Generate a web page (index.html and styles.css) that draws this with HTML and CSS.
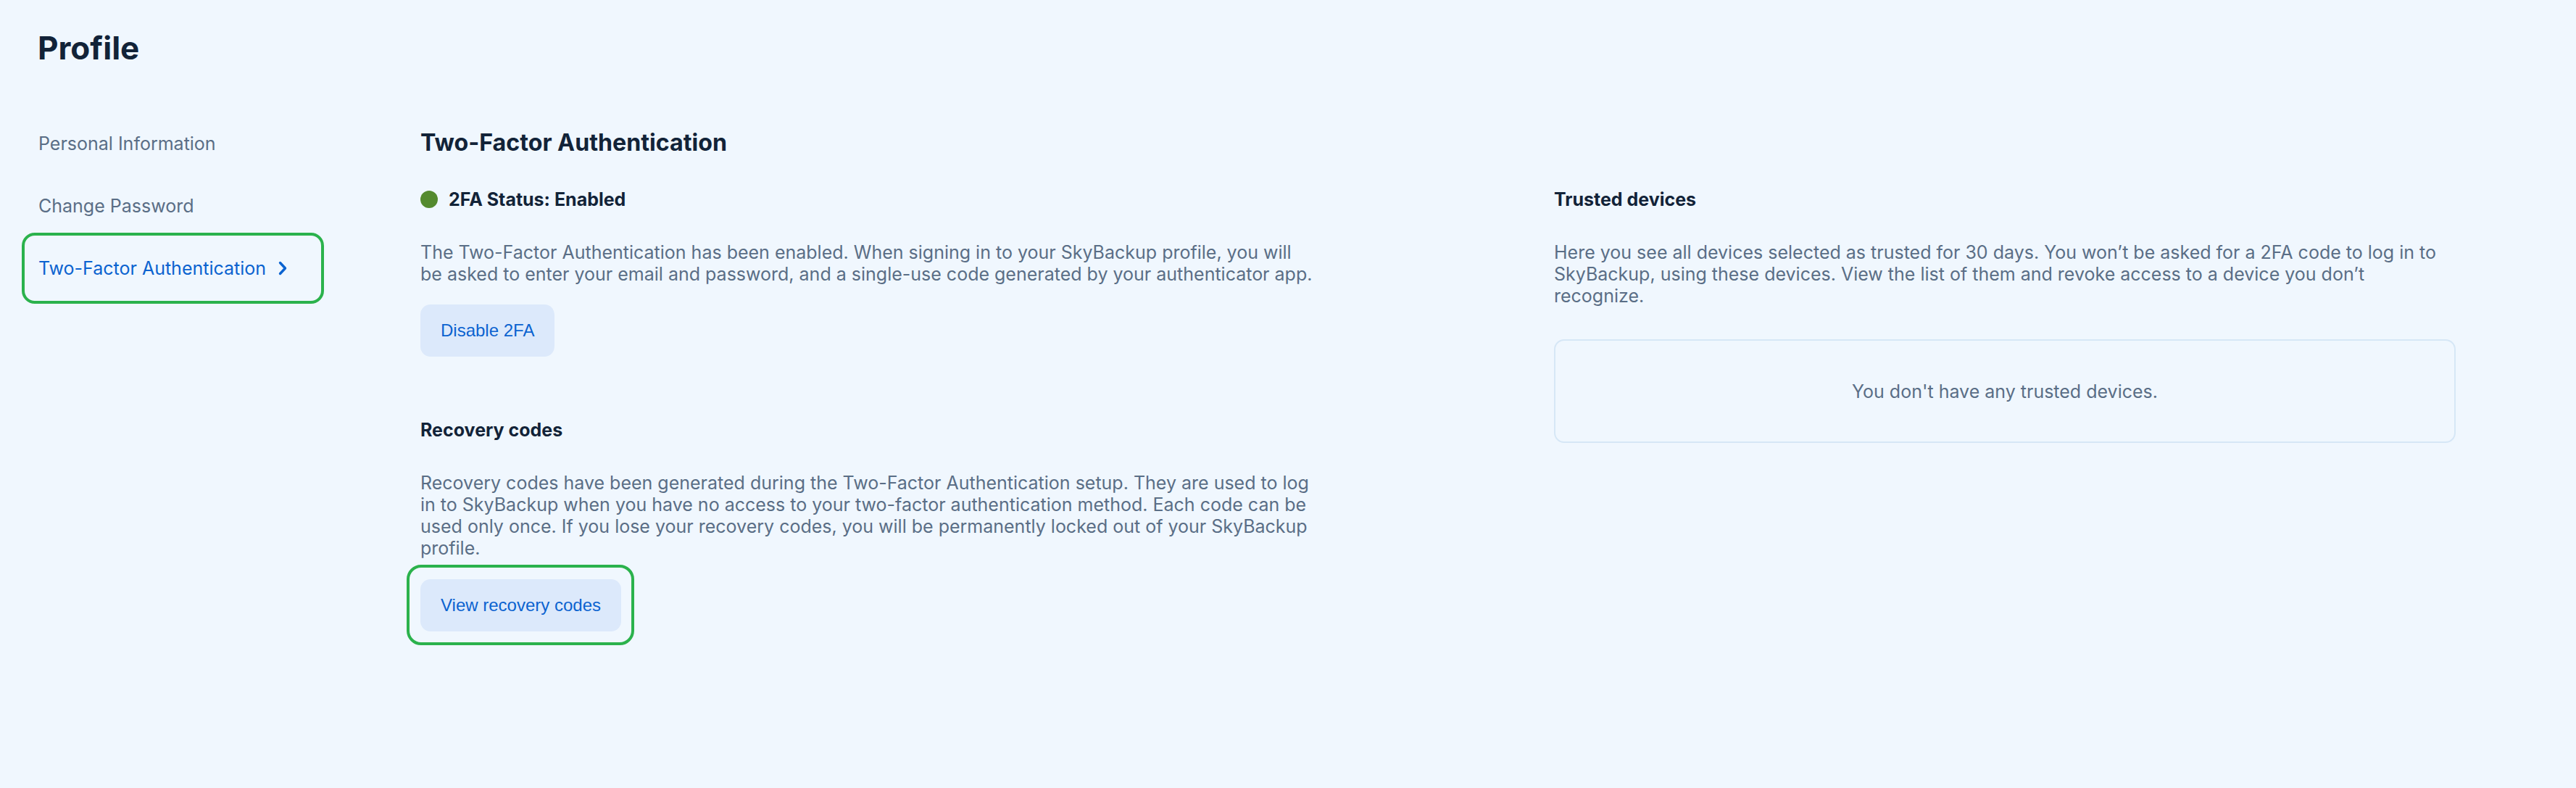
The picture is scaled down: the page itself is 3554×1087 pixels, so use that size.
FILE: index.html
```html
<!DOCTYPE html>
<html lang="en">
<head>
<meta charset="utf-8">
<title>Profile</title>
<link rel="stylesheet" href="styles.css">
</head>
<body>
<div class="page">
  <h1 class="page-title">Profile</h1>
  <div class="layout">
    <nav class="side-nav">
      <a class="nav-item">Personal Information</a>
      <a class="nav-item">Change Password</a>
      <a class="nav-item nav-item--active">Two-Factor Authentication
        <svg class="chevron" viewBox="0 0 12 20" width="12" height="20" aria-hidden="true"><path d="M2.5 2.5 L9.5 10 L2.5 17.5" fill="none" stroke="currentColor" stroke-width="3.4" stroke-linecap="round" stroke-linejoin="round"/></svg>
      </a>
    </nav>
    <main class="main">
      <h2 class="section-title">Two-Factor Authentication</h2>
      <div class="columns">
        <section class="col">
          <div class="status">
            <span class="status-dot"></span>
            <h3 class="sub-title">2FA Status: Enabled</h3>
          </div>
          <p class="text">The Two-Factor Authentication has been enabled. When signing in to your SkyBackup profile, you will be asked to enter your email and password, and a single-use code generated by your authenticator app.</p>
          <button class="btn">Disable 2FA</button>
          <h3 class="sub-title sub-title--spaced">Recovery codes</h3>
          <p class="text">Recovery codes have been generated during the Two-Factor Authentication setup. They are used to log in to SkyBackup when you have no access to your two-factor authentication method. Each code can be used only once. If you lose your recovery codes, you will be permanently locked out of your SkyBackup profile.</p>
          <div class="highlight">
            <button class="btn btn--flush">View recovery codes</button>
          </div>
        </section>
        <section class="col">
          <h3 class="sub-title">Trusted devices</h3>
          <p class="text">Here you see all devices selected as trusted for 30 days. You won’t be asked for a 2FA code to log in to SkyBackup, using these devices. View the list of them and revoke access to a device you don’t recognize.</p>
          <div class="empty-box">You don't have any trusted devices.</div>
        </section>
      </div>
    </main>
  </div>
</div>
</body>
</html>
```

FILE: styles.css
```css
* { box-sizing: border-box; }

html, body {
  margin: 0;
  padding: 0;
  background: #f0f7fe;
}

body {
  font-family: Inter, "Noto Sans", sans-serif;
  color: #5a6e86;
  font-size: 25px;
  line-height: 30px;
}

.page {
  padding: 40px 166px 0 36px;
}

.page-title {
  margin: 0 0 0 16px;
  font-size: 44px;
  line-height: 52px;
  font-weight: 700;
  color: #122338;
}

.layout {
  display: grid;
  grid-template-columns: 405px 1fr;
  column-gap: 139px;
  margin-top: 63px;
}

.side-nav {
  display: flex;
  flex-direction: column;
}

.nav-item {
  display: flex;
  align-items: center;
  height: 86px;
  padding: 0 17px;
  color: #5a6e86;
  text-decoration: none;
  white-space: nowrap;
}

.nav-item--active {
  color: #0b63d0;
  outline: 4px solid #2bb24c;
  outline-offset: 2px;
  border-radius: 12px;
}

.chevron {
  margin-left: 17px;
  color: #0b63d0;
}

.main {
  padding-top: 22px;
}

.section-title {
  margin: 0 0 43px;
  font-size: 32.2px;
  line-height: 40px;
  font-weight: 700;
  color: #122338;
}

.columns {
  display: grid;
  grid-template-columns: 1232px 1fr;
  column-gap: 332px;
}

.col {
  display: flex;
  flex-direction: column;
  align-items: flex-start;
  min-width: 0;
}

.status {
  display: flex;
  align-items: center;
  gap: 15px;
}

.status-dot {
  width: 24px;
  height: 24px;
  border-radius: 50%;
  background: #548a2e;
}

.sub-title {
  margin: 0;
  font-size: 25px;
  line-height: 30px;
  font-weight: 700;
  color: #122338;
}

.sub-title--spaced {
  margin-top: 86px;
}

.text {
  margin: 43px 0 0;
  font-size: 25px;
  line-height: 30px;
  color: #5a6e86;
}

.btn {
  margin-top: 27px;
  height: 72px;
  padding: 0 28px;
  border: none;
  border-radius: 14px;
  background: #dce9fb;
  color: #0b63d0;
  font-family: "Liberation Sans", Arial, sans-serif;
  font-size: 24px;
  line-height: 28px;
}

.btn--flush {
  margin-top: 0;
}

.highlight {
  margin: 8px 0 0 -19px;
  padding: 16px 14px 15px 15px;
  border: 4px solid #2bb24c;
  border-radius: 20px;
}

.empty-box {
  align-self: stretch;
  margin-top: 45px;
  height: 143px;
  display: flex;
  align-items: center;
  justify-content: center;
  border: 2px solid #d6e7f6;
  border-radius: 14px;
  color: #5a6e86;
}
```
